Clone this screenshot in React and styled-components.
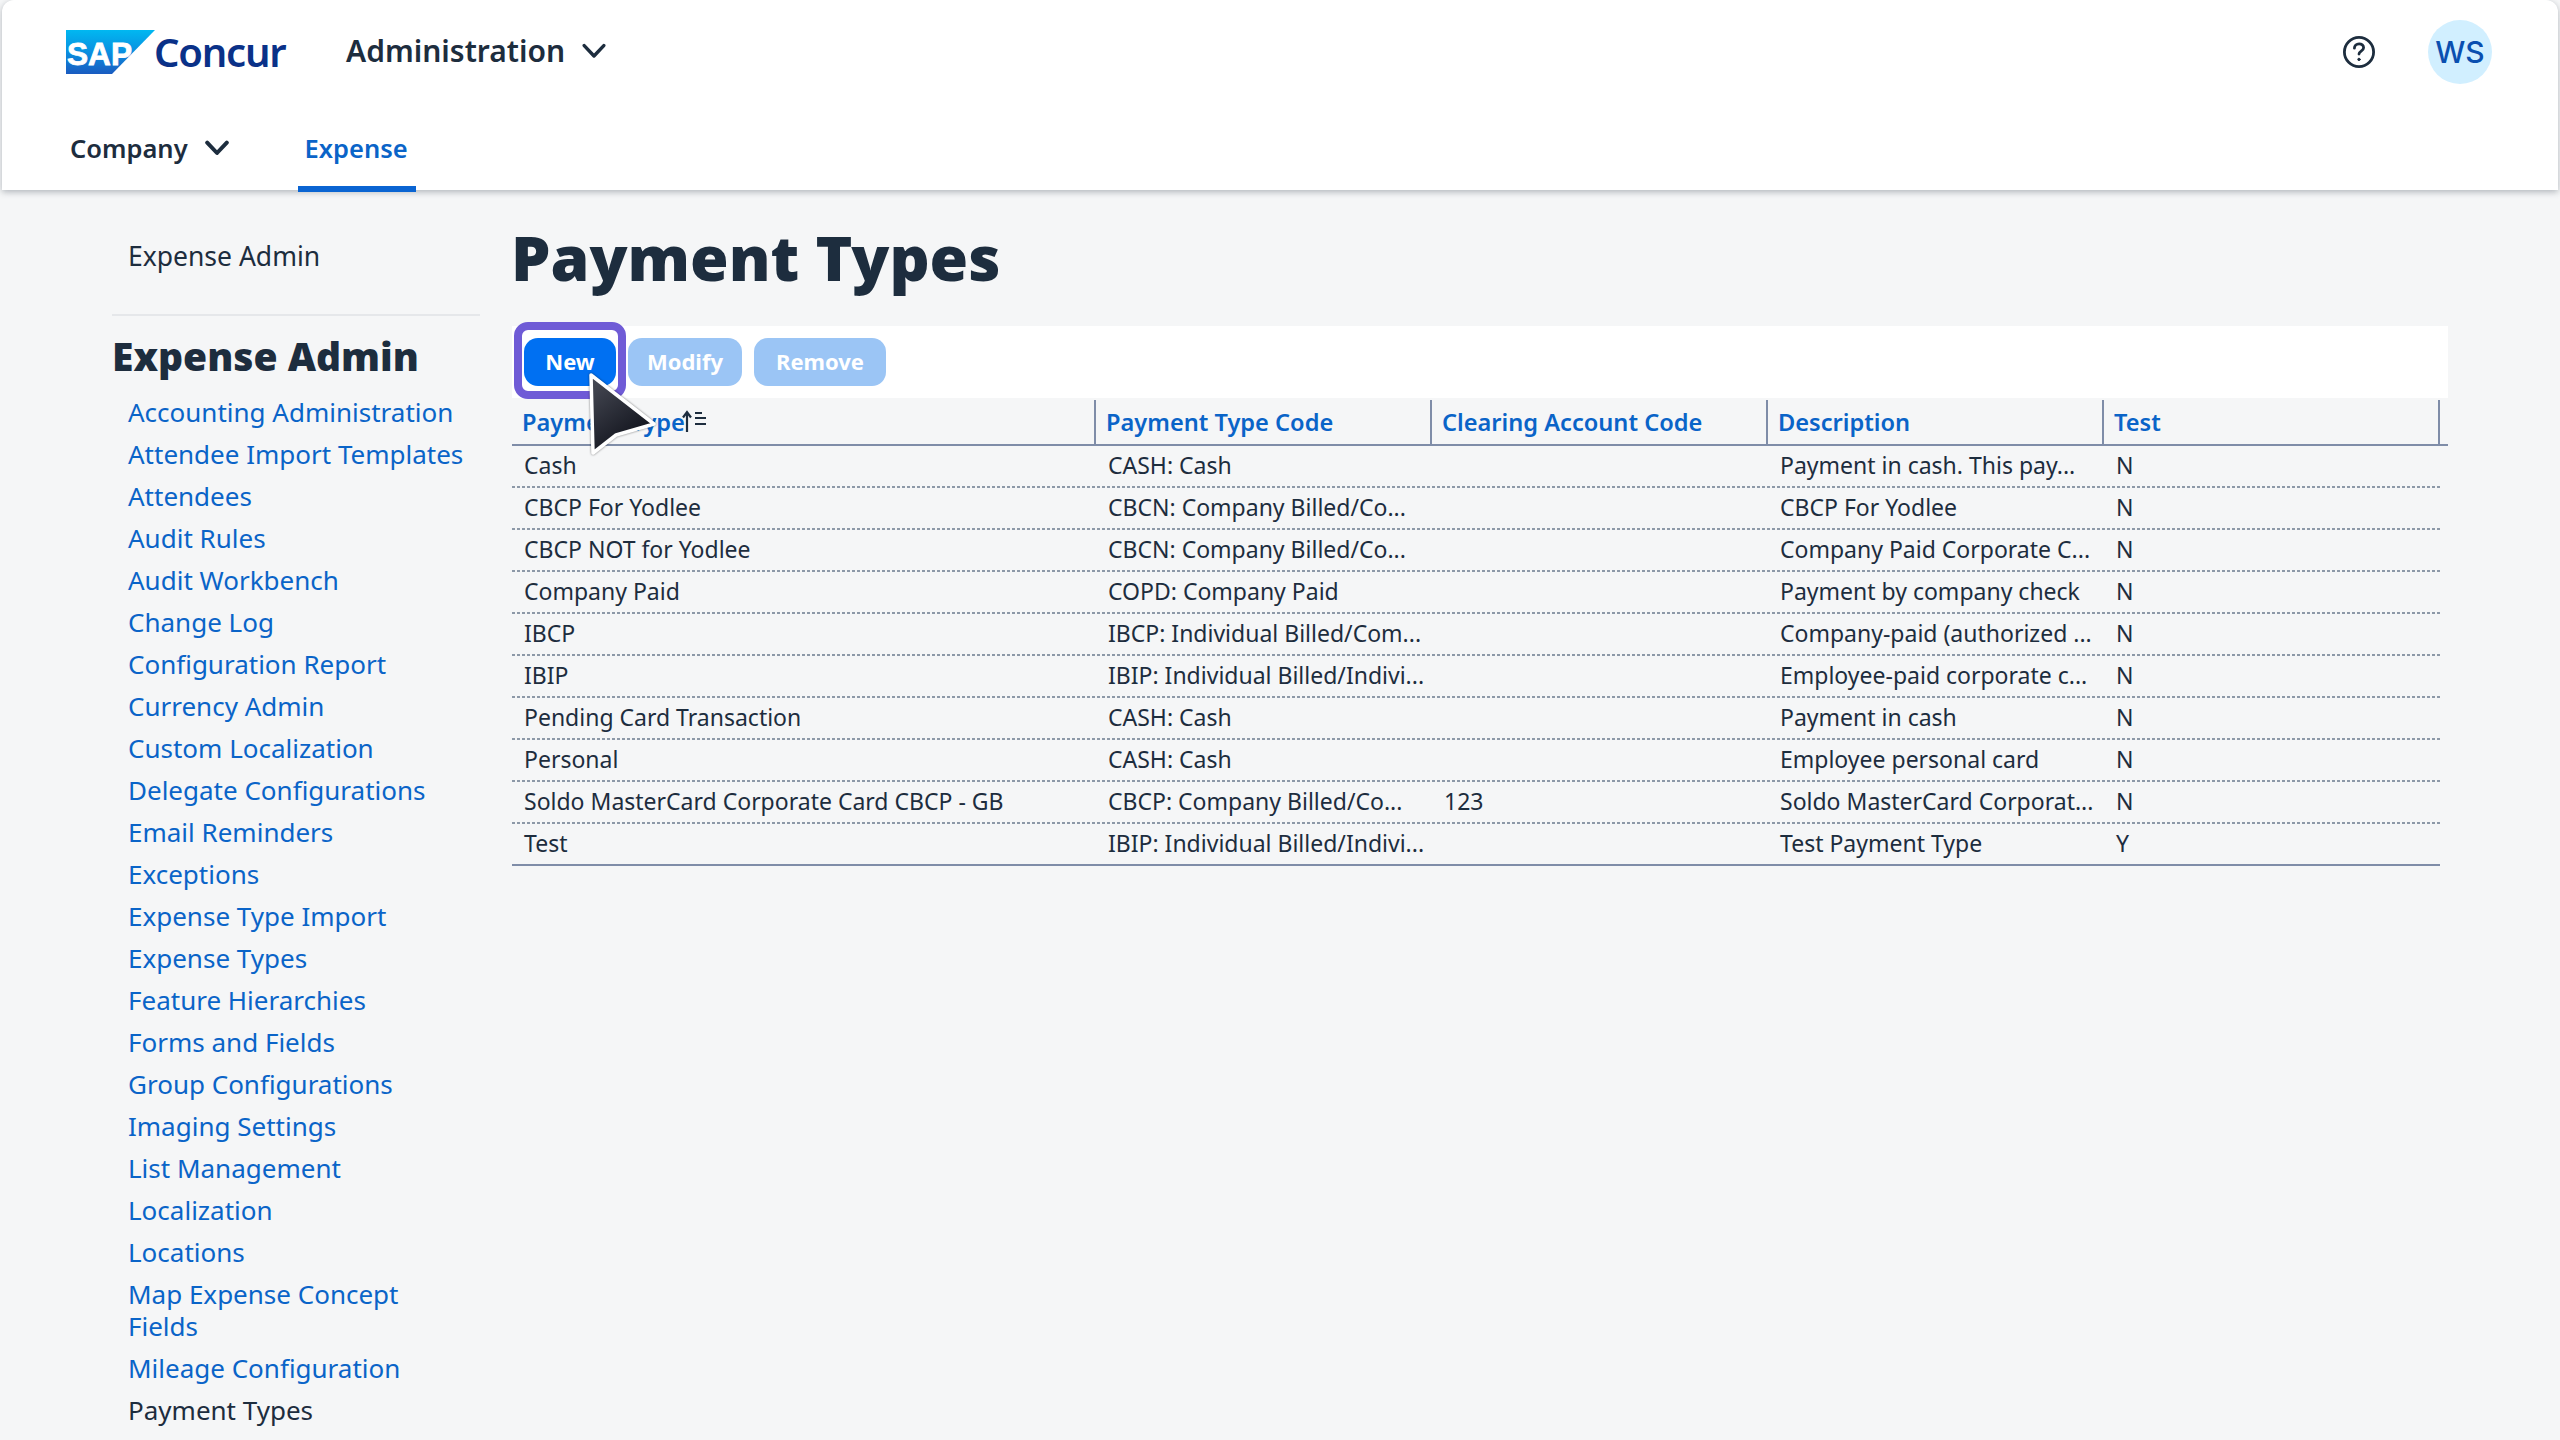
import React from "react";
import styled, { createGlobalStyle } from "styled-components";

const Global = createGlobalStyle`
  html, body { margin: 0; padding: 0; background: #f5f6f7; }
  body { font-family: "Noto Sans", "Open Sans", sans-serif; color: #1d2d3e; }
  * { box-sizing: border-box; }
`;

const Page = styled.div`
  width: 2560px;
  height: 1440px;
  overflow: hidden;
  position: relative;
  background: #f5f6f7;
`;

const Header = styled.header`
  height: 190px;
  margin: 0 2px;
  background: #fff;
  border-radius: 12px 12px 0 0;
  box-shadow: 0 2px 6px rgba(50, 60, 75, 0.35);
  display: flex;
  flex-direction: column;
  position: relative;
`;

const TopBar = styled.div`
  height: 104px;
  flex: none;
  display: flex;
  align-items: center;
  padding: 0 66px 0 64px;
`;

const LogoWrap = styled.div`
  display: flex;
  align-items: center;
  width: 220px;
`;

const Concur = styled.span`
  font-size: 40px;
  font-weight: 600;
  color: #0a3188;
  letter-spacing: -1.2px;
  line-height: 44px;
  margin-left: -1px;
`;

const AppMenu = styled.div`
  display: flex;
  align-items: center;
  margin-left: 60px;
  gap: 17px;
  font-size: 30px;
  font-weight: 600;
  line-height: 40px;
  padding-bottom: 2px;
`;

const RightTools = styled.div`
  margin-left: auto;
  display: flex;
  align-items: center;
  gap: 52px;
`;

const Avatar = styled.div`
  width: 64px;
  height: 64px;
  border-radius: 50%;
  background: #d1efff;
  color: #0a4fb0;
  font-family: "Inter", sans-serif;
  font-size: 30px;
  font-weight: 500;
  display: flex;
  align-items: center;
  justify-content: center;
`;

const TabBar = styled.nav`
  height: 88px;
  flex: none;
  display: flex;
  align-items: stretch;
  padding-left: 68px;
`;

const Tab = styled.div`
  display: flex;
  align-items: center;
  gap: 17px;
  font-size: 25.5px;
  font-weight: 600;
  padding: 6px 7px 0;
  min-width: ${(p) => (p.$active ? "118px" : "auto")};
  color: ${(p) => (p.$active ? "#0a64c8" : "#1d2d3e")};
  border-bottom: 6px solid ${(p) => (p.$active ? "#0a64d2" : "transparent")};
  margin-left: ${(p) => (p.$active ? "62px" : "-7px")};
`;

const Main = styled.main`
  display: grid;
  grid-template-columns: 368px 1fr;
  column-gap: 32px;
  padding: 0 112px;
`;

const Sidebar = styled.aside`
  padding-top: 50px;
`;

const Crumb = styled.div`
  font-size: 26.5px;
  line-height: 32px;
  padding-left: 16px;
  padding-bottom: 42px;
  border-bottom: 2px solid #e5e7ea;
`;

const SideTitle = styled.h2`
  margin: 16px 0 11px;
  font-size: 39px;
  line-height: 48px;
  font-weight: 900;
  color: #1d2d3e;
`;

const SideList = styled.ul`
  list-style: none;
  margin: 0;
  padding: 0 14px 0 16px;
`;

const SideItem = styled.li`
  font-size: 26px;
  line-height: 32px;
  padding: 5px 0;
  color: ${(p) => (p.$current ? "#1d2d3e" : "#0a64c8")};
`;

const Content = styled.section`
  padding-top: 31px;
`;

const Title = styled.h1`
  margin: 0 0 33px -1px;
  font-size: 62.5px;
  line-height: 72px;
  font-weight: 900;
  color: #1d2d3e;
`;

const Toolbar = styled.div`
  height: 72px;
  background: #fff;
  display: flex;
  align-items: center;
  gap: 12px;
  padding-left: 12px;
`;

const Button = styled.button`
  height: 48px;
  width: ${(p) => p.$w}px;
  padding: 0 0 2px;
  border: 0;
  border-radius: 14px;
  font-family: inherit;
  font-size: 22px;
  font-weight: 700;
  color: #fff;
  background: ${(p) => (p.$primary ? "#0070f2" : "#9bc5f5")};
  position: relative;
  &::after {
    content: ${(p) => (p.$focus ? '""' : "none")};
    position: absolute;
    top: -16px;
    bottom: -13px;
    left: -10px;
    right: -10px;
    border: 8px solid #6f5bd6;
    border-radius: 14px;
    pointer-events: none;
  }
`;

const cols = "584px 336px 336px 336px 336px";

const HeadRow = styled.div`
  display: grid;
  grid-template-columns: ${cols};
  height: 48px;
  border-bottom: 2px solid #7f8da8;
`;

const HeadCell = styled.div`
  display: flex;
  align-items: center;
  gap: 0;
  margin-top: 2px;
  padding-left: 10px;
  font-size: 23.6px;
  font-weight: 600;
  color: #0a64c8;
  border-right: 2px solid #7f8da8;
`;

const Row = styled.div`
  display: grid;
  grid-template-columns: ${cols};
  width: 1928px;
  height: 42px;
  ${(p) =>
    p.$last
      ? "border-bottom: 2px solid #7f8da8;"
      : `background: repeating-linear-gradient(to right, #8d99a8 0 3px, transparent 3px 5px) left bottom / 100% 2px no-repeat;`}
`;

const Cell = styled.div`
  padding-left: 12px;
  font-size: 23px;
  line-height: 39px;
  white-space: nowrap;
  overflow: hidden;
`;

const SortSvg = styled.svg`
  width: 28px;
  height: 28px;
  margin-left: -4px;
  flex: none;
`;

const Cursor = styled.svg`
  position: absolute;
  left: 585px;
  top: 368px;
  width: 76px;
  height: 92px;
  filter: drop-shadow(0 0 1px rgba(0, 0, 0, 0.5));
`;

const SapLogo = () => (
  <svg width="89" height="44" viewBox="0 0 89 44">
    <defs>
      <linearGradient id="sapg" x1="0" y1="0" x2="0" y2="1">
        <stop offset="0" stopColor="#00b8f1" />
        <stop offset="0.5" stopColor="#0a8fe0" />
        <stop offset="1" stopColor="#1a5bc0" />
      </linearGradient>
    </defs>
    <polygon points="0,0 89,0 46,44 0,44" fill="url(#sapg)" />
    <text x="1" y="35" fontFamily="'Liberation Sans', sans-serif" fontSize="32" fontWeight="700" fill="#fff" stroke="#fff" strokeWidth="0.8" textLength="65" lengthAdjust="spacingAndGlyphs">SAP</text>
  </svg>
);

const Chevron = ({ weight = 3.6 }) => (
  <svg width="24" height="16" viewBox="0 0 24 16" fill="none" stroke="#1d2d3e" strokeWidth={weight} strokeLinecap="round" strokeLinejoin="round">
    <path d="M2.2 2.6 12 13 21.8 2.6" />
  </svg>
);

const HelpIcon = () => (
  <svg width="34" height="34" viewBox="0 0 34 34" fill="none" stroke="#1d2d3e" strokeWidth="2.8" strokeLinecap="round">
    <circle cx="17" cy="17" r="14.6" />
    <path d="M12.4 13.2c0-2.8 2.1-4.4 4.7-4.4 2.5 0 4.5 1.6 4.5 3.9 0 3.4-4.6 3.4-4.6 6.4" />
    <circle cx="17" cy="24.4" r="1.2" fill="#1d2d3e" strokeWidth="1" />
  </svg>
);

const SortIcon = () => (
  <SortSvg viewBox="0 0 28 28" fill="none" stroke="#1d2d3e" strokeWidth="2.2">
    <path d="M6 24V5M2 9.5 6 4l4 5.5" />
    <path d="M14 5h7M14 10h11M14 16h11" />
  </SortSvg>
);

const sideItems = [
  "Accounting Administration", "Attendee Import Templates", "Attendees", "Audit Rules", "Audit Workbench",
  "Change Log", "Configuration Report", "Currency Admin", "Custom Localization", "Delegate Configurations",
  "Email Reminders", "Exceptions", "Expense Type Import", "Expense Types", "Feature Hierarchies",
  "Forms and Fields", "Group Configurations", "Imaging Settings", "List Management", "Localization",
  "Locations", "Map Expense Concept Fields", "Mileage Configuration",
];

const rows = [
  ["Cash", "CASH: Cash", "", "Payment in cash. This pay...", "N"],
  ["CBCP For Yodlee", "CBCN: Company Billed/Co...", "", "CBCP For Yodlee", "N"],
  ["CBCP NOT for Yodlee", "CBCN: Company Billed/Co...", "", "Company Paid Corporate C...", "N"],
  ["Company Paid", "COPD: Company Paid", "", "Payment by company check", "N"],
  ["IBCP", "IBCP: Individual Billed/Com...", "", "Company-paid (authorized ...", "N"],
  ["IBIP", "IBIP: Individual Billed/Indivi...", "", "Employee-paid corporate c...", "N"],
  ["Pending Card Transaction", "CASH: Cash", "", "Payment in cash", "N"],
  ["Personal", "CASH: Cash", "", "Employee personal card", "N"],
  ["Soldo MasterCard Corporate Card CBCP - GB", "CBCP: Company Billed/Co...", "123", "Soldo MasterCard Corporat...", "N"],
  ["Test", "IBIP: Individual Billed/Indivi...", "", "Test Payment Type", "Y"],
];

export default function App() {
  return (
    <Page>
      <Global />
      <Header>
        <TopBar>
          <LogoWrap>
            <SapLogo />
            <Concur>Concur</Concur>
          </LogoWrap>
          <AppMenu>
            Administration
            <Chevron weight={3.4} />
          </AppMenu>
          <RightTools>
            <HelpIcon />
            <Avatar>WS</Avatar>
          </RightTools>
        </TopBar>
        <TabBar>
          <Tab>
            Company
            <Chevron weight={4} />
          </Tab>
          <Tab $active>Expense</Tab>
        </TabBar>
      </Header>
      <Main>
        <Sidebar>
          <Crumb>Expense Admin</Crumb>
          <SideTitle>Expense Admin</SideTitle>
          <SideList>
            {sideItems.map((s) => (
              <SideItem key={s}>{s}</SideItem>
            ))}
            <SideItem $current>Payment Types</SideItem>
          </SideList>
        </Sidebar>
        <Content>
          <Title>Payment Types</Title>
          <Toolbar>
            <Button $primary $focus $w={92}>New</Button>
            <Button $w={114}>Modify</Button>
            <Button $w={132}>Remove</Button>
          </Toolbar>
          <HeadRow>
            <HeadCell>Payment Type<SortIcon /></HeadCell>
            <HeadCell>Payment Type Code</HeadCell>
            <HeadCell>Clearing Account Code</HeadCell>
            <HeadCell>Description</HeadCell>
            <HeadCell>Test</HeadCell>
          </HeadRow>
          {rows.map((r, i) => (
            <Row key={r[0]} $last={i === rows.length - 1}>
              {r.map((c, j) => (
                <Cell key={j}>{c}</Cell>
              ))}
            </Row>
          ))}
        </Content>
      </Main>
      <Cursor viewBox="0 0 76 92">
        <defs>
          <linearGradient id="cur" x1="0" y1="0" x2="0.6" y2="1">
            <stop offset="0" stopColor="#4a4d58" />
            <stop offset="1" stopColor="#0d0f18" />
          </linearGradient>
        </defs>
        <path d="M6 7 L69 56 L31 67 L8 85 Z" fill="url(#cur)" stroke="#fff" strokeWidth="3.5" strokeLinejoin="round" />
      </Cursor>
    </Page>
  );
}
